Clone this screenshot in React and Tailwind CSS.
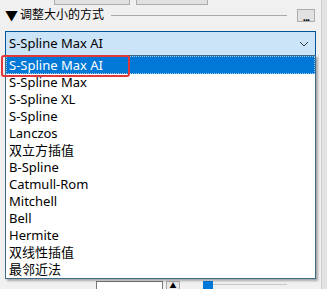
import React from 'react';

const items = [
    'S-Spline Max AI',
    'S-Spline Max',
    'S-Spline XL',
    'S-Spline',
    'Lanczos',
    '双立方插值',
    'B-Spline',
    'Catmull-Rom',
    'Mitchell',
    'Bell',
    'Hermite',
    '双线性插值',
    '最邻近法',
];

const font = { fontFamily: '"Noto Sans", "Noto Sans CJK SC", sans-serif' };

export default function App() {
    return (
        <div className="w-[327px] h-[289px] bg-[#f0f0f0] relative overflow-hidden flex text-[#000]" style={font}>
            <div className="w-[321px] flex flex-col">
                {/* cut-off buttons at the top */}
                <div className="flex h-[5px] pl-[54px] gap-[6px]">
                    <div className="w-[76px] h-full bg-[#e1e1e1] border border-t-0 border-[#adadad]" />
                    <div className="w-[72px] h-full bg-[#e1e1e1] border border-t-0 border-[#adadad]" />
                </div>

                {/* section header */}
                <div className="flex items-center h-[16px] mt-[2px] pl-[5px] pr-[6px]">
                    <span className="text-[13px] leading-none mr-[2px]">▼</span>
                    <span className="text-[12px] leading-none">调整大小的方式</span>
                    <div className="flex-1 h-px bg-[#a8a8a8] ml-[7px] mr-[10px]" />
                    <div className="w-[18px] h-[13px] bg-[#e1e1e1] border border-[#adadad] flex items-end justify-center">
                        <span className="text-[11px] leading-[9px] tracking-[-1px] font-bold">...</span>
                    </div>
                </div>

                {/* combobox */}
                <div className="ml-[5px] mt-[8px] w-[311px] h-[25px] bg-[#cce4f7] border border-[#005499] flex items-center justify-between pl-[3px] pr-[6px]">
                    <span className="text-[13px] leading-none">S-Spline Max AI</span>
                    <svg width="10" height="6" viewBox="0 0 10 6">
                        <path d="M1 1 L5 5 L9 1" fill="none" stroke="#3a3a3a" strokeWidth="1" />
                    </svg>
                </div>

                <div className="flex-1" />

                {/* controls below the popup */}
                <div className="flex items-start h-[8px] pl-[96px]">
                    <div className="w-[67px] h-[10px] bg-white border border-[#7a7a7a]" />
                    <div className="ml-[3px] w-[14px] h-[10px] bg-[#e8e8e8] border border-[#adadad] flex justify-center">
                        <span className="text-[7px] leading-[8px]">▲</span>
                    </div>
                    <div className="ml-[23px] w-[10px] h-[10px] bg-[#0078d7]" />
                    <div className="mt-[3px] w-[74px] h-px bg-[#c8c8c8]" />
                </div>
            </div>

            {/* right edge */}
            <div className="w-[6px] h-full bg-[#e3e3e3] border-l border-[#cfcfcf]" />

            {/* dropdown popup */}
            <div className="absolute left-[5px] top-[55px] w-[311px] h-[224px] bg-white border border-[#3d6a86] shadow-[2px_2px_2px_rgba(0,0,0,0.3)] flex flex-col">
                {items.map((it, i) => (
                    <div
                        key={it}
                        className={
                            i === 0
                                ? 'h-[18px] flex items-center pl-[2px] bg-[#0078d7] text-white border border-dotted border-[#9ec9ee]'
                                : 'h-[17px] flex items-center pl-[3px]'
                        }
                    >
                        <span className="text-[13px] leading-none">{it}</span>
                    </div>
                ))}
            </div>

            {/* red annotation */}
            <div className="absolute left-[1px] top-[55px] w-[129px] h-[22px] border-2 border-[#e0383a] rounded-[3px]" />
        </div>
    );
}
